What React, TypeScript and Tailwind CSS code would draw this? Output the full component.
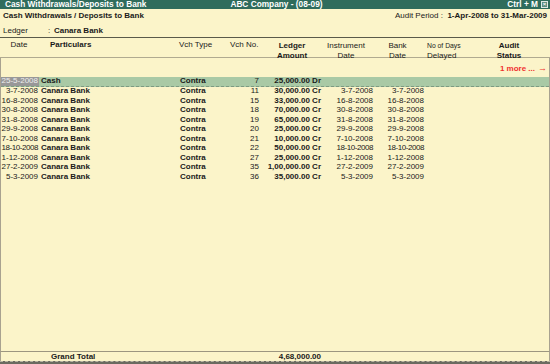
const rows = [
  { date: "25-5-2008", party: "Cash", type: "Contra", no: "7", amt: "25,000.00 Dr", inst: "", bank: "" },
  { date: "3-7-2008", party: "Canara Bank", type: "Contra", no: "11", amt: "30,000.00 Cr", inst: "3-7-2008", bank: "3-7-2008" },
  { date: "16-8-2008", party: "Canara Bank", type: "Contra", no: "15", amt: "33,000.00 Cr", inst: "16-8-2008", bank: "16-8-2008" },
  { date: "30-8-2008", party: "Canara Bank", type: "Contra", no: "18", amt: "70,000.00 Cr", inst: "30-8-2008", bank: "30-8-2008" },
  { date: "31-8-2008", party: "Canara Bank", type: "Contra", no: "19", amt: "65,000.00 Cr", inst: "31-8-2008", bank: "31-8-2008" },
  { date: "29-9-2008", party: "Canara Bank", type: "Contra", no: "20", amt: "25,000.00 Cr", inst: "29-9-2008", bank: "29-9-2008" },
  { date: "7-10-2008", party: "Canara Bank", type: "Contra", no: "21", amt: "10,000.00 Cr", inst: "7-10-2008", bank: "7-10-2008" },
  { date: "18-10-2008", party: "Canara Bank", type: "Contra", no: "22", amt: "50,000.00 Cr", inst: "18-10-2008", bank: "18-10-2008" },
  { date: "1-12-2008", party: "Canara Bank", type: "Contra", no: "27", amt: "25,000.00 Cr", inst: "1-12-2008", bank: "1-12-2008" },
  { date: "27-2-2009", party: "Canara Bank", type: "Contra", no: "35", amt: "1,00,000.00 Cr", inst: "27-2-2009", bank: "27-2-2009" },
  { date: "5-3-2009", party: "Canara Bank", type: "Contra", no: "36", amt: "35,000.00 Cr", inst: "5-3-2009", bank: "5-3-2009" },
];

const cols = "grid grid-cols-[38px_141px_51px_28px_62px_52px_51px_47px_1fr]";

export default function App() {
  return (
    <div className="w-[550px] h-[364px] overflow-hidden bg-[#fbf4c9] text-[#1a1a1a] font-['Liberation_Sans',Arial,sans-serif] text-[8px] leading-none whitespace-nowrap flex flex-col">
      {/* title bar */}
      <div className="h-[9px] bg-[#2f6c5c] text-white font-bold text-[8.3px] grid grid-cols-[1fr_auto_1fr] items-center px-[5px] pr-[2px]">
        <span>Cash Withdrawals/Deposits to Bank</span>
        <span>ABC Company - (08-09)</span>
        <span className="flex items-center justify-end gap-[3px]">
          Ctrl + M
          <span className="w-[7px] h-[7px] border border-white/80 bg-[#5d8d80] flex items-center justify-center text-[6px] leading-none">×</span>
        </span>
      </div>

      {/* report heading */}
      <div className="h-[12px] flex items-end justify-between px-[3px] pr-[3px] pb-[1px]">
        <span className="font-bold">Cash Withdrawals / Deposits to Bank</span>
        <span>
          Audit Period :&nbsp; <span className="font-bold">1-Apr-2008 to 31-Mar-2009</span>
        </span>
      </div>
      <div className="h-[16px] flex items-center px-[3px] pt-[3px]">
        <span className="w-[45px]">Ledger</span>
        <span className="w-[6px]">:</span>
        <span className="font-bold">Canara Bank</span>
      </div>

      {/* column headers */}
      <div className="border-t border-[#5a5a4a] border-b-[#b0aa90] border-b h-[21px] pr-[2px]">
        <div className={`${cols} pt-[3px]`}>
          <div className="text-center">Date</div>
          <div className="font-bold pl-[12px]">Particulars</div>
          <div>Vch Type</div>
          <div className="text-right">Vch No.</div>
          <div className="font-bold text-center pl-[6px] leading-[9.5px]">Ledger<br />Amount</div>
          <div className="text-center leading-[9.5px]">Instrument<br />Date</div>
          <div className="text-center leading-[9.5px]">Bank<br />Date</div>
          <div className="text-[6.8px] pl-[4px] leading-[9.5px]">No of Days<br /><span className="text-[8px]">Delayed</span></div>
          <div className="font-bold text-center leading-[9.5px]">Audit<br />Status</div>
        </div>
      </div>

      {/* body */}
      <div className="flex-1 flex flex-col border-l border-r border-[#a8a290]">
        <div className="h-[19px] flex items-center justify-end pr-[2px] pt-[2px] text-[#f03030] font-bold">
          1 more ... <span className="ml-[3px] text-[9px]">→</span>
        </div>
        {rows.map((r, i) => {
          const tight = r.date.length > 9 ? "tracking-[-0.45px]" : "";
          return (
            <div
              key={i}
              className={`${cols} h-[9.5px] items-center ${i === 0 ? "bg-[#a9c9a5] border-b border-dashed border-[#7d9a82]" : ""}`}
            >
              <div className={`pr-[1px] h-full flex items-center justify-end ${tight} ${i === 0 ? "bg-[#989898] text-[#eeeeee]" : ""}`}>{r.date}</div>
              <div className="font-bold pl-[2px]">{r.party}</div>
              <div className="font-bold">{r.type}</div>
              <div className="text-right">{r.no}</div>
              <div className="font-bold flex justify-end">{r.amt}</div>
              <div className={`text-right ${tight}`}>{r.inst}</div>
              <div className={`text-right ${tight}`}>{r.bank}</div>
              <div />
              <div />
            </div>
          );
        })}
      </div>

      {/* footer */}
      <div className="border-t border-[#9c9680] border-l border-r border-l-[#a8a290] border-r-[#a8a290] h-[10px]">
        <div className={`${cols} h-full items-center`}>
          <div />
          <div className="font-bold pl-[12px]">Grand Total</div>
          <div />
          <div />
          <div className="font-bold flex justify-end">4,68,000.00</div>
        </div>
      </div>
      <div className="h-[3px] bg-[#6b6b60] border-t border-dashed border-[#b8b4a0]" />
    </div>
  );
}
